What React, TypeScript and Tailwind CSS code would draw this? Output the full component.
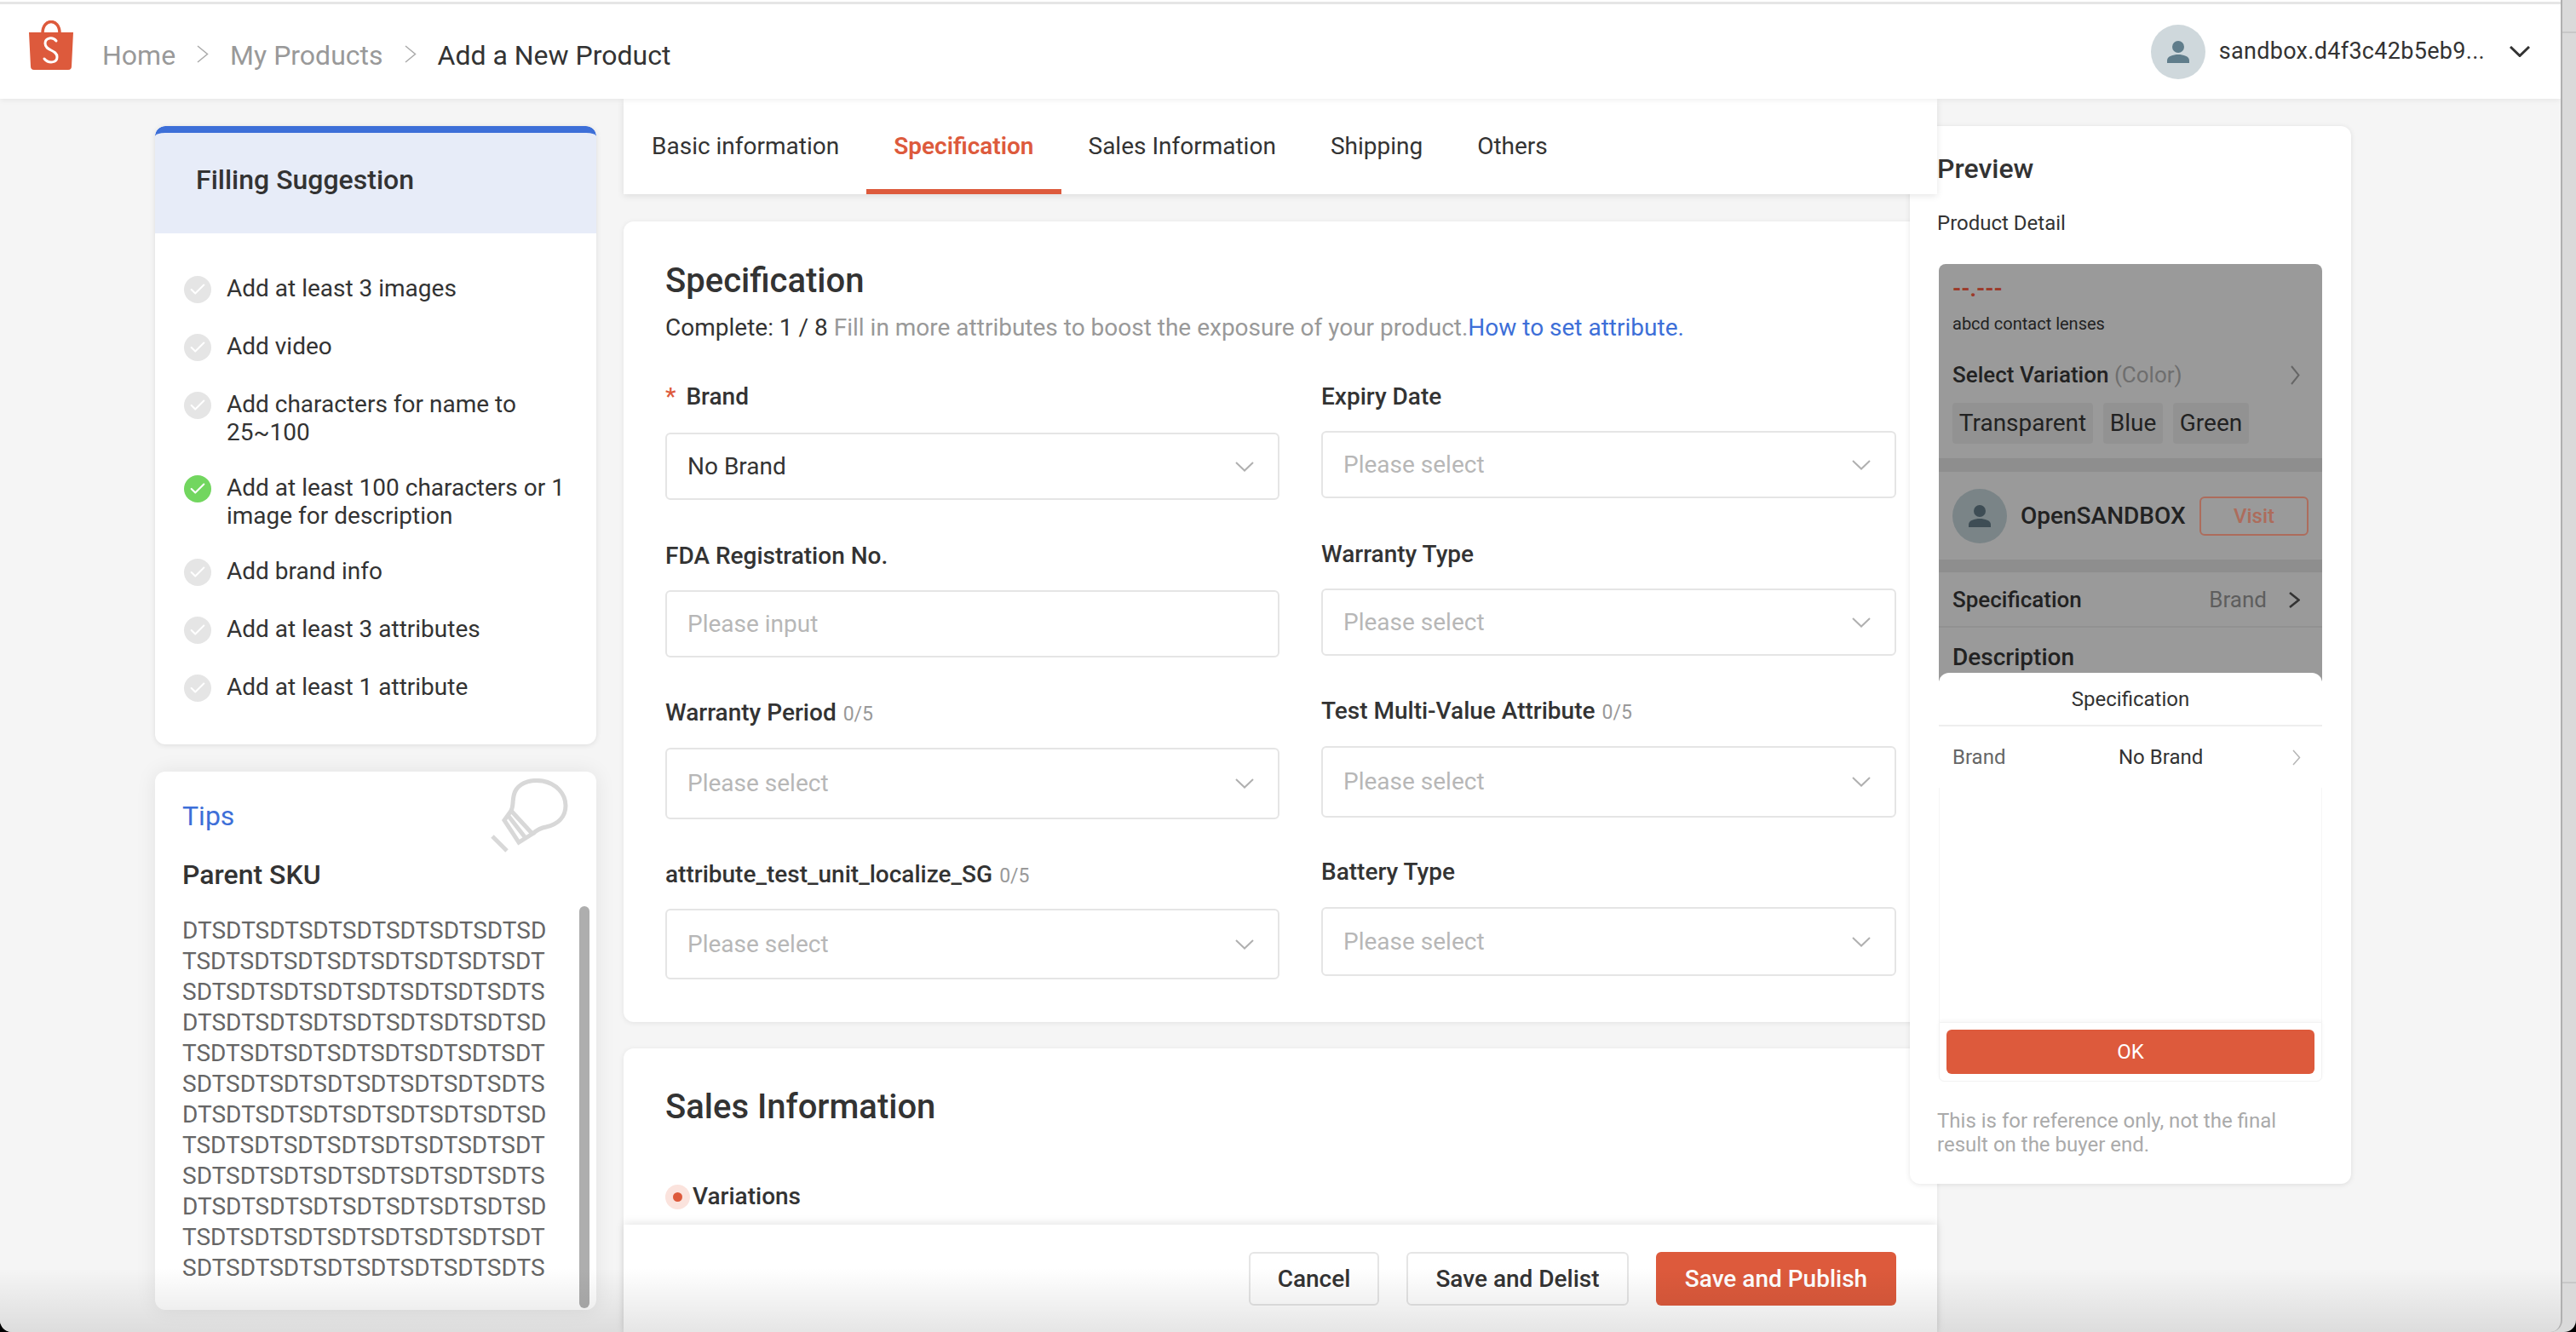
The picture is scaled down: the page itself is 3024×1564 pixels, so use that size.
import { Check } from "lucide-react";

const suggestions = [
  { text: "Add at least 3 images", done: false },
  { text: "Add video", done: false },
  { text: "Add characters for name to 25~100", done: false },
  { text: "Add at least 100 characters or 1 image for description", done: true },
  { text: "Add brand info", done: false },
  { text: "Add at least 3 attributes", done: false },
  { text: "Add at least 1 attribute", done: false },
];

const skuLines = Array.from({ length: 12 }, (_, i) =>
  ["DTSDTSDTSDTSDTSDTSDTSDTSD", "TSDTSDTSDTSDTSDTSDTSDTSDT", "SDTSDTSDTSDTSDTSDTSDTSDTS"][i % 3]
);

function ShopeeLogo() {
  return (
    <svg width="52" height="58" viewBox="0 0 52 58" className="mt-[-15px]">
      <path d="M16 15 C16 -3 36 -3 36 15" fill="none" stroke="#dd5a3c" strokeWidth="3.5" />
      <path d="M0 14 H52 L50 54 C50 56 49 58 46 58 H6 C3 58 2 56 2 54 Z" fill="#dd5a3c" />
      <path d="M32 24 C28 19 19 20 19 27 C19 36 33 34 33 43 C33 50 23 51 18 45" fill="none" stroke="#fff" strokeWidth="3" strokeLinecap="round" />
    </svg>
  );
}

function Bulb() {
  return (
    <svg width="92" height="88" viewBox="0 0 92 88" fill="none" stroke="#d8d8d8" strokeWidth="5" className="absolute left-[393px] top-[8px]">
      <path d="M25 38 C29 30 25 22 31 13 C37 4 50 1 62 3 C78 6 89 18 89 32 C89 46 79 54 66 57 C60 58 56 60 50 65" />
      <path d="M25 38 L17 49 L34 75 L50 65 Z" />
      <path d="M21 43 L42 70" />
      <path d="M3 68 L20 85" />
    </svg>
  );
}

function Chev({ w, h, sw = 2, className }: { w: number; h: number; sw?: number; className?: string }) {
  return (
    <svg width={w} height={h} viewBox={`0 0 ${w} ${h}`} fill="none" stroke="currentColor" strokeWidth={sw} className={`shrink-0 ${className ?? ""}`}>
      <path d={`M1 1 L${w - 1.5} ${h / 2} L1 ${h - 1}`} />
    </svg>
  );
}

function ChevDown({ w, h, sw = 2, className }: { w: number; h: number; sw?: number; className?: string }) {
  return (
    <svg width={w} height={h} viewBox={`0 0 ${w} ${h}`} fill="none" stroke="currentColor" strokeWidth={sw} className={`shrink-0 ${className ?? ""}`}>
      <path d={`M1 1 L${w / 2} ${h - 1.5} L${w - 1} 1`} />
    </svg>
  );
}

function Avatar({ dim }: { dim?: boolean }) {
  return (
    <div className={`flex h-16 w-16 shrink-0 items-center justify-center rounded-full ${dim ? "bg-[#7a8487]" : "bg-[#cfd8dc]"}`}>
      <svg width="28" height="26" viewBox="0 0 28 26" className={dim ? "fill-[#3e4d55]" : "fill-[#607d8b]"}>
        <circle cx="14" cy="7" r="7" />
        <path d="M1 26 V23 C1 18 8 16 14 16 C20 16 27 18 27 23 V26 Z" />
      </svg>
    </div>
  );
}

function FieldBox({ value, placeholder, select, h, mb }: { value?: string; placeholder?: string; select?: boolean; h: string; mb: string }) {
  return (
    <div className={`flex items-center justify-between rounded-md border-2 border-[#e5e5e5] bg-white pl-[24px] pr-[28px] text-[28px] ${h} ${mb}`}>
      <span className={value ? "text-[#333]" : "text-[#b7b7b7]"}>{value ?? placeholder}</span>
      {select && <ChevDown w={22} h={12} className="text-[#b0b0b0]" />}
    </div>
  );
}

function Label({ children, count, mb }: { children: string; count?: boolean; mb: string }) {
  return (
    <div className={`h-10 text-[28px] leading-10 font-medium text-[#333] ${mb}`}>
      {children}
      {count && <span className="ml-2 text-[23px] font-normal text-[#999]">0/5</span>}
    </div>
  );
}

function Suggestion({ text, done }: { text: string; done: boolean }) {
  return (
    <li className="flex min-h-[36px] items-start gap-[18px]">
      <span className={`mt-[2px] flex h-8 w-8 shrink-0 items-center justify-center rounded-full ${done ? "bg-[#72d65f]" : "bg-[#e5e5e5]"}`}>
        <Check size={22} strokeWidth={2.25} className="text-white" />
      </span>
      <span className="text-[28px] leading-[33px] text-[#333]">{text}</span>
    </li>
  );
}

export default function App() {
  return (
    <div className="h-[1564px] w-[3024px] bg-black font-['Roboto',sans-serif]">
      <div className="flex h-full w-full overflow-hidden rounded-b-[14px] bg-[#dadada]">
        <div className="relative flex w-[3008px] shrink-0 flex-col overflow-hidden rounded-br-[14px] border-r-2 border-[#b0b0b0] bg-[#f5f5f5]">
          <header className="relative z-30 h-[116px] shrink-0 bg-white shadow-[0_2px_6px_rgba(0,0,0,0.06)]">
            <div className="mt-[2px] h-[3px] bg-[#e5e5e5]" />
            <div className="flex h-[111px] items-center pl-[34px] pr-[36px]">
              <ShopeeLogo />
              <nav className="ml-[34px] mt-2 flex items-center text-[32px] text-[#999]">
                <span>Home</span>
                <Chev w={14} h={21} sw={1.5} className="mx-[25px] mb-[3px] text-[#aaa]" />
                <span>My Products</span>
                <Chev w={14} h={21} sw={1.5} className="mx-[25px] mb-[3px] text-[#aaa]" />
                <span className="text-[#333]">Add a New Product</span>
              </nav>
              <div className="ml-auto flex items-center">
                <Avatar />
                <span className="ml-4 text-[27px] tracking-[0.3px] text-[#333]">sandbox.d4f3c42b5eb9...</span>
                <ChevDown w={24} h={13} sw={3} className="ml-[29px] text-[#333]" />
              </div>
            </div>
          </header>

          <main className="flex min-h-0 flex-1 pl-[182px]">
            {/* left rail */}
            <aside className="w-[518px] shrink-0 pt-8">
              <section className="overflow-hidden rounded-xl bg-white shadow-[0_1px_6px_rgba(0,0,0,0.1)]">
                <div className="flex h-[126px] items-center rounded-t-xl border-t-8 border-[#3d6fd8] bg-[#e7ecf8] pb-2 pl-[48px] text-[32px] font-medium text-[#333]">
                  Filling Suggestion
                </div>
                <ul className="flex flex-col gap-8 pb-12 pl-[34px] pr-[30px] pt-12">
                  {suggestions.map((s) => (
                    <Suggestion key={s.text} text={s.text} done={s.done} />
                  ))}
                </ul>
              </section>

              <section className="relative mt-8 h-[632px] rounded-xl bg-white pl-8 pt-[34px] shadow-[0_0_24px_rgba(0,0,0,0.08)]">
                <Bulb />
                <div className="text-[32px] leading-9 text-[#3d6fd8]">Tips</div>
                <div className="mt-[33px] text-[32px] leading-9 font-medium text-[#333]">Parent SKU</div>
                <div className="mt-[30px] text-[28px] leading-[36px] text-[#666]">
                  {skuLines.map((line, i) => (
                    <div key={i}>{line}</div>
                  ))}
                </div>
                <div className="absolute right-2 top-[158px] h-[472px] w-3 rounded-md bg-[#aeaeae]" />
              </section>
            </aside>

            {/* center column */}
            <div className="relative ml-8 w-[1542px] shrink-0">
              <nav className="relative z-20 flex h-[112px] items-stretch bg-white pl-px text-[28px] text-[#333] shadow-[0_2px_8px_rgba(0,0,0,0.1)]">
                <a className="flex items-center px-8">Basic information</a>
                <a className="flex items-center border-b-[6px] border-[#dd5a3c] px-8 pt-[6px] font-semibold text-[#dd5a3c]">Specification</a>
                <a className="flex items-center px-8">Sales Information</a>
                <a className="flex items-center px-8">Shipping</a>
                <a className="flex items-center px-8">Others</a>
              </nav>

              <section className="mt-8 h-[940px] rounded-xl bg-white pl-[49px] pt-12 shadow-[0_1px_6px_rgba(0,0,0,0.08)]">
                <h2 className="text-[40px] leading-[44px] font-medium text-[#333]">Specification</h2>
                <p className="mt-[15px] text-[28px] leading-9 text-[#999]">
                  <span className="text-[#333]">Complete: 1 / 8</span> Fill in more attributes to boost the exposure of your product.
                  <span className="text-[#3d6fd8]">How to set attribute.</span>
                </p>
                <div className="mt-[43px] flex">
                  <div className="w-[721px]">
                    <div className="mb-[22px] h-10 text-[28px] leading-10 font-medium text-[#333]">
                      <span className="mr-3 text-[#dd5a3c]">*</span>Brand
                    </div>
                    <FieldBox value="No Brand" select h="h-[79px]" mb="mb-[46px]" />
                    <Label mb="mb-5">FDA Registration No.</Label>
                    <FieldBox placeholder="Please input" h="h-[79px]" mb="mb-[45px]" />
                    <Label count mb="mb-[21px]">Warranty Period</Label>
                    <FieldBox placeholder="Please select" select h="h-[84px]" mb="mb-[45px]" />
                    <Label count mb="mb-5">attribute_test_unit_localize_SG</Label>
                    <FieldBox placeholder="Please select" select h="h-[83px]" mb="mb-0" />
                  </div>
                  <div className="ml-[49px] w-[675px]">
                    <Label mb="mb-5">Expiry Date</Label>
                    <FieldBox placeholder="Please select" select h="h-[79px]" mb="mb-[46px]" />
                    <Label mb="mb-5">Warranty Type</Label>
                    <FieldBox placeholder="Please select" select h="h-[79px]" mb="mb-[45px]" />
                    <Label count mb="mb-[21px]">Test Multi-Value Attribute</Label>
                    <FieldBox placeholder="Please select" select h="h-[84px]" mb="mb-[44px]" />
                    <Label mb="mb-[21px]">Battery Type</Label>
                    <FieldBox placeholder="Please select" select h="h-[81px]" mb="mb-0" />
                  </div>
                </div>
              </section>

              <section className="mt-[31px] h-[400px] rounded-t-xl bg-white pl-[49px] pt-[47px] shadow-[0_1px_6px_rgba(0,0,0,0.08)]">
                <h2 className="text-[40px] leading-[44px] font-medium text-[#333]">Sales Information</h2>
                <div className="mt-[63px] flex h-10 items-center text-[28px] font-medium text-[#333]">
                  <span className="mr-[3px] flex h-[29px] w-[29px] items-center justify-center rounded-full bg-[#fbe3dd]">
                    <span className="h-[11px] w-[11px] rounded-full bg-[#dd5a3c]" />
                  </span>
                  Variations
                </div>
              </section>

              {/* sticky footer */}
              <div className="absolute bottom-0 left-0 right-0 z-20 flex h-[126px] items-start justify-end gap-8 bg-white pr-[48px] pt-8 shadow-[0_-2px_10px_rgba(0,0,0,0.1)]">
                <button className="h-[63px] w-[153px] rounded-md border-2 border-[#e5e5e5] bg-white text-[28px] font-medium text-[#333]">Cancel</button>
                <button className="h-[63px] w-[261px] rounded-md border-2 border-[#e5e5e5] bg-white text-[28px] font-medium text-[#333]">Save and Delist</button>
                <button className="h-[63px] w-[282px] rounded-md bg-[#dd5a3c] text-[28px] font-medium text-white">Save and Publish</button>
              </div>
            </div>

            {/* preview, sits over the right edge of the center column */}
            <aside className="relative z-10 -ml-8 w-[518px] shrink-0 pt-8">
              <div className="h-[1242px] rounded-xl bg-white pl-8 pt-8 shadow-[0_1px_6px_rgba(0,0,0,0.1)]">
                <div className="text-[32px] leading-9 font-medium text-[#333]">Preview</div>
                <div className="mt-[31px] text-[24px] leading-[30px] text-[#333]">Product Detail</div>

                <div className="ml-[2px] mt-[33px] w-[450px]">
                  <div className="h-[490px] overflow-hidden rounded-t-lg bg-[#9a9a9a] text-[#222]">
                    <div className="px-4 pt-[15px]">
                      <div className="h-7 text-[26px] leading-7 font-bold text-[#9c3a2a]">--.---</div>
                      <div className="mt-[15px] text-[20px] leading-6">abcd contact lenses</div>
                      <div className="mt-8 flex h-8 items-center justify-between pr-[10px] text-[26px] font-medium">
                        <span>
                          Select Variation <span className="font-normal text-[#6e6e6e]">(Color)</span>
                        </span>
                        <Chev w={11} h={23} className="text-[#666]" />
                      </div>
                      <div className="mt-[17px] flex gap-3 text-[28px]">
                        <span className="flex h-12 w-[165px] items-center justify-center rounded bg-[#929292]">Transparent</span>
                        <span className="flex h-12 w-[70px] items-center justify-center rounded bg-[#929292]">Blue</span>
                        <span className="flex h-12 w-[89px] items-center justify-center rounded bg-[#929292]">Green</span>
                      </div>
                    </div>
                    <div className="mt-[17px] h-4 bg-[#8e8e8e]" />
                    <div className="flex h-[103px] items-center pl-4 pr-4">
                      <Avatar dim />
                      <span className="ml-4 text-[28px] font-medium">OpenSANDBOX</span>
                      <span className="ml-auto flex h-[46px] w-[128px] items-center justify-center rounded-md border-2 border-[#ad6c5c] text-[24px] font-medium text-[#ad6c5c]">Visit</span>
                    </div>
                    <div className="h-[15px] bg-[#8e8e8e]" />
                    <div className="flex h-[65px] items-center border-b-2 border-[#919191] pl-4 pr-[26px] pt-[2px] text-[26px]">
                      <span className="font-medium">Specification</span>
                      <span className="ml-auto text-[#5e5e5e]">Brand</span>
                      <Chev w={13} h={19} sw={2.5} className="ml-[26px] text-[#333]" />
                    </div>
                    <div className="mt-[14px] pl-4 text-[28px] font-medium">Description</div>
                  </div>

                  <div className="relative -mt-[10px] rounded-t-xl bg-white">
                    <div className="flex h-[63px] items-center justify-center border-b-2 border-[#eeeeee] text-[24px] text-[#333]">Specification</div>
                    <div className="flex h-[72px] items-center pl-4 pr-[25px] text-[24px]">
                      <span className="w-[195px] text-[#666]">Brand</span>
                      <span className="text-[#333]">No Brand</span>
                      <Chev w={10} h={19} sw={1.5} className="ml-auto text-[#b5b5b5]" />
                    </div>
                    <div className="h-[275px] border-x border-[#f6f6f6]" />
                    <div className="rounded-b-md border border-[#f2f2f2] px-2 py-2 shadow-[0_-2px_4px_rgba(0,0,0,0.03)]">
                      <div className="flex h-[52px] items-center justify-center rounded-md bg-[#dd5a3c] text-[24px] text-white">OK</div>
                    </div>
                  </div>
                </div>

                <p className="mt-8 w-[440px] text-[24px] leading-7 text-[#aaa]">This is for reference only, not the final result on the buyer end.</p>
              </div>
            </aside>
          </main>

          {/* fade at the bottom of the window */}
          <div className="pointer-events-none absolute inset-x-0 bottom-0 z-40 h-[75px] bg-linear-to-b from-transparent to-black/10" />
        </div>

        <div className="flex-1 pt-[37px]">
          <div className="h-[1470px] border-y-2 border-[#c8c8c8]" />
        </div>
      </div>
    </div>
  );
}
